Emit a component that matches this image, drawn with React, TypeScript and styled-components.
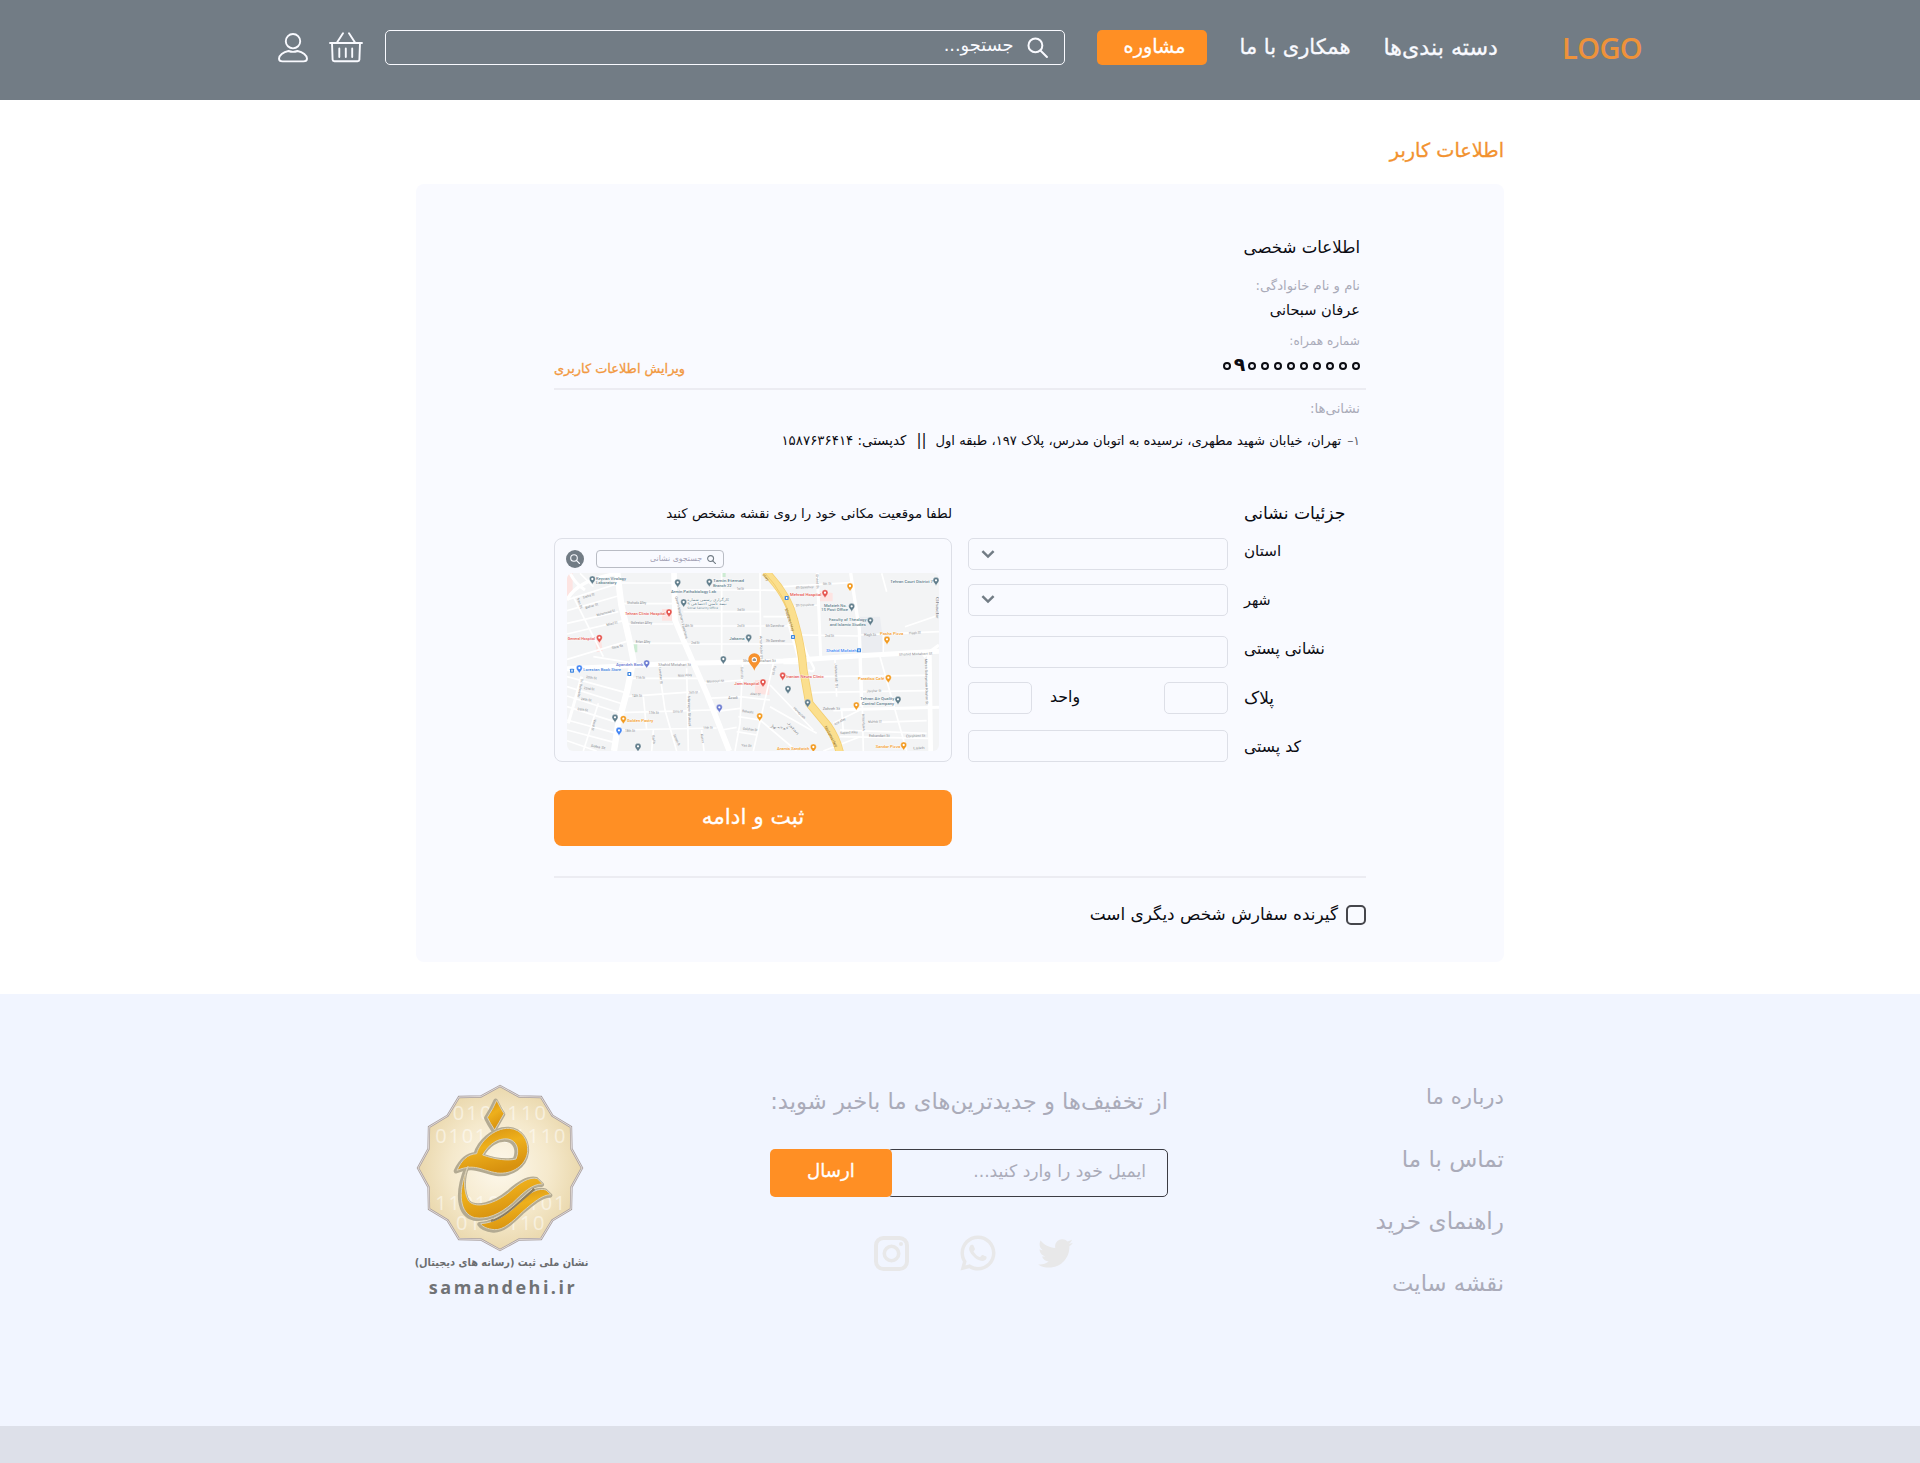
import React from 'react';
import styled, { createGlobalStyle } from 'styled-components';
import { RiTwitterFill, RiWhatsappLine } from 'react-icons/ri';

const orange = '#ff8f24';
const muted = '#aaabb9';
const line = '#dddfe7';
const sans = '"DejaVu Sans", "Noto Sans", sans-serif';

const Global = createGlobalStyle`
  * { box-sizing: border-box; }
  body { margin: 0; background: #fff; font-family: ${sans}; color: #0b0b12; }
  input, button { font-family: inherit; }
`;

const Page = styled.div`
  direction: rtl;
  min-height: 1463px;
  display: flex;
  flex-direction: column;
`;

const Text = styled.span<{ $s: number; $l: number; $c?: string; $mt?: number; $medium?: boolean }>`
  display: block;
  white-space: nowrap;
  font-size: ${(p) => p.$s}px;
  font-weight: 400;
  line-height: ${(p) => p.$l}px;
  margin: ${(p) => p.$mt ?? 0}px 0 0;
  color: ${(p) => p.$c ?? 'inherit'};
  -webkit-text-stroke: ${(p) => (p.$medium ? '0.3px' : '0')};
`;

/* Header */
const Header = styled.header`
  height: 100px;
  background: #727c85;
  padding: 30px 279px 0 278px;
  display: flex;
  align-items: flex-start;
`;
const Brand = styled.div`
  direction: ltr;
  width: 79px;
  margin-left: 64px;
  font: 600 29px/36px "Open Sans", "Noto Sans", sans-serif;
  letter-spacing: -0.6px;
  color: #ee923a;
  text-align: right;
  white-space: nowrap;
`;
const Nav = styled.nav`
  display: flex;
  gap: 33px;
  margin-left: 33px;
  color: #f9faff;
`;
const ConsultButton = styled.button`
  width: 110px;
  height: 35px;
  padding: 0 0 0 6px;
  border: 0;
  border-radius: 5px;
  background: ${orange};
  color: #fff;
  display: flex;
  align-items: flex-start;
  justify-content: center;
  margin-left: 32px;
`;
const SearchBox = styled.div`
  flex: 1;
  height: 35px;
  border: 1px solid #f9faff;
  border-radius: 5px;
  display: flex;
  align-items: flex-start;
  gap: 13px;
  padding: 0 16px;
  color: #f9faff;
`;
const SearchIcon = styled.div`
  display: flex;
  margin-top: 6px;
`;
const HeaderIcon = styled.svg<{ $w: number; $gap: number }>`
  width: ${(p) => p.$w}px;
  height: 32px;
  margin: 2px ${(p) => p.$gap}px 0 0;
  fill: none;
  stroke: #f9faff;
  stroke-width: 1.9;
  stroke-linecap: round;
  stroke-linejoin: round;
`;

/* Card */
const Main = styled.main`
  padding: 30px 416px 32px;
`;
const Card = styled.section`
  margin-top: 12px;
  height: 778px;
  border-radius: 8px;
  background: #f9faff;
  padding: 51px 138px 0;
`;
const Info = styled.div`
  padding-right: 6px;
`;
const PhoneRow = styled.div`
  height: 39px;
  padding-right: 4px;
  border-bottom: 2px solid #ececf2;
  display: flex;
  justify-content: space-between;
`;
const Phone = styled.div`
  direction: ltr;
  display: flex;
  height: 37px;
`;
const Digit = styled.span`
  width: 12.9px;
  display: flex;
  justify-content: center;
  font-weight: 700;
  font-size: 19px;
  line-height: 26px;
`;
const Zero = styled.span`
  width: 8px;
  height: 8px;
  margin-top: 11px;
  border: 2px solid #0b0b12;
  border-radius: 50%;
  font-weight: 400;
  font-size: 4px;
  line-height: 4px;
  text-align: center;
`;
const AddressRow = styled.div`
  display: flex;
  margin-top: 11px;
`;
const Gap = styled.span<{ $w: number }>`
  width: ${(p) => p.$w}px;
`;

const Details = styled.div`
  display: flex;
  gap: 16px;
  margin-top: 50px;
`;
const Labels = styled.div`
  width: 122px;
  height: 261px;
  display: flex;
  flex-direction: column;
  align-items: flex-end;
`;
const Fields = styled.div`
  width: 260px;
  padding-top: 37px;
`;
const FieldRow = styled.div<{ $mt: number }>`
  display: flex;
  align-items: flex-start;
  margin-top: ${(p) => p.$mt}px;
`;
const Field = styled.input<{ $small?: boolean }>`
  width: ${(p) => (p.$small ? '64px' : '100%')};
  height: 32px;
  border: 1px solid ${line};
  border-radius: 5px;
  background: #f9faff;
  padding: 0 8px;
`;
const Select = styled.div<{ $top: number }>`
  width: 100%;
  height: 32px;
  border: 1px solid ${line};
  border-radius: 5px;
  display: flex;
  justify-content: flex-end;
  padding: ${(p) => p.$top}px 0 0 12px;
`;
const UnitLabel = styled.div`
  margin: 0 auto 0 18px;
`;
const MapColumn = styled.div`
  width: 398px;
`;
const MapPanel = styled.div`
  margin-top: 11px;
  height: 224px;
  border: 1px solid ${line};
  border-radius: 8px;
  padding: 11px 12px 0;
`;
const MapTools = styled.div`
  display: flex;
  justify-content: flex-end;
  gap: 12px;
  margin-left: -1px;
  margin-bottom: 5px;
`;
const MapSearch = styled.div`
  width: 128px;
  height: 18px;
  border: 1px solid #b9bcc4;
  border-radius: 4px;
  display: flex;
  align-items: flex-start;
  gap: 5px;
  padding: 0 7px;
`;
const SmallIcon = styled.span`
  display: flex;
  margin-top: 4px;
`;
const RoundButton = styled.button`
  width: 18px;
  height: 18px;
  padding: 0;
  border: 0;
  border-radius: 50%;
  background: #727c85;
  display: flex;
  align-items: center;
  justify-content: center;
`;
const MapSvg = styled.svg`
  display: block;
  width: 372px;
  height: 178px;
  border-radius: 6px;
  direction: ltr;
`;
const Submit = styled.button`
  width: 100%;
  height: 56px;
  margin-top: 28px;
  padding: 0;
  border: 0;
  border-radius: 8px;
  background: ${orange};
  color: #fff;
  display: flex;
  justify-content: center;
  align-items: flex-start;
`;
const Receiver = styled.label`
  display: flex;
  gap: 8px;
  margin-top: 30px;
  padding-top: 27px;
  border-top: 2px solid #ececf2;
`;
const Checkbox = styled.input`
  appearance: none;
  width: 20px;
  height: 20px;
  margin: 0;
  border: 2px solid #46464c;
  border-radius: 5px;
`;

/* Footer */
const Footer = styled.footer`
  height: 432px;
  background: #f1f5ff;
  padding: 72px 416px 0 415px;
  display: flex;
`;
const Links = styled.nav`
  width: 336px;
  color: ${muted};
`;
const Newsletter = styled.div`
  width: 398px;
  padding-top: 14px;
  color: ${muted};
`;
const Form = styled.div`
  display: flex;
  height: 48px;
  margin-top: 27px;
`;
const Email = styled.div`
  flex: 1;
  border: 1px solid #3c3c43;
  border-radius: 5px;
  margin-left: -5px;
  padding: 0 21px;
`;
const Send = styled.button`
  width: 122px;
  height: 48px;
  padding: 0;
  border: 0;
  border-radius: 5px;
  background: ${orange};
  color: #fff;
  display: flex;
  justify-content: center;
  z-index: 1;
`;
const Social = styled.div`
  display: flex;
  align-items: center;
  height: 42px;
  margin-top: 35px;
  padding-right: 92px;
  color: #e8e8e9;
`;
const WhatsApp = styled.span`
  display: flex;
  margin-right: 36px;
  margin-left: -4px;
`;
const Insta = styled.svg`
  width: 35px;
  height: 35px;
  margin-right: 52px;
`;
const Seal = styled.div`
  width: 173px;
  margin-right: auto;
  padding-top: 18px;
  display: flex;
  flex-direction: column;
  align-items: center;
`;
const SealArt = styled.svg`
  width: 168px;
  height: 168px;
  margin-right: 3px;
  direction: ltr;
`;
const SealCaption = styled.div`
  font: 700 10.9px/20px "DejaVu Sans Condensed", "DejaVu Sans", sans-serif;
  color: #6b6d70;
  white-space: nowrap;
  margin-top: 1px;
`;
const SealSite = styled.div`
  direction: ltr;
  font: 700 18px/24px "Open Sans", "Noto Sans", sans-serif;
  letter-spacing: 2.5px;
  color: #707275;
  white-space: nowrap;
  margin: 2px 0 0 3px;
`;
const BottomBar = styled.div`
  height: 37px;
  background: #dde0e9;
`;

const Magnifier = ({ size, color, w = 1.9 }: { size: number; color: string; w?: number }) => (
  <svg width={size} height={size} viewBox="0 0 20 20" fill="none" stroke={color} strokeWidth={w} strokeLinecap="round">
    <circle cx="8" cy="8" r="6.6" />
    <path d="M12.8 12.8 19 19" />
  </svg>
);
const Chevron = () => (
  <svg width="14" height="10" viewBox="0 0 14 10" fill="none" stroke="#727c85" strokeWidth="2.500">
    <path d="M1.400 1.200 7 6.600l5.600-5.400" />
  </svg>
);

type Pin = [number, number, string];
const slate = '#607d8b';
const red = '#e5554f';
const amber = '#f29a1f';
const blue = '#4285f4';
const violet = '#6b7bd0';
const pins: Pin[] = [
  [157, 270, slate], [413, 280, slate], [508, 278, slate], [431, 339, slate], [387, 369, red],
  [178, 446, red], [626, 445, slate], [550, 510, slate], [320, 522, violet], [118, 537, blue],
  [669, 579, red], [538, 655, violet], [225, 685, slate], [250, 689, amber], [237, 724, blue],
  [294, 772, slate], [659, 681, amber], [728, 559, red], [744, 599, slate], [803, 640, slate],
  [820, 774, amber], [949, 648, amber], [1045, 566, amber], [1074, 631, slate], [1091, 768, amber],
  [1041, 451, amber], [991, 394, slate], [935, 352, slate], [930, 291, amber], [855, 311, red],
  [1188, 274, slate],
];
type Place = [number, number, string, string, number?];
const places: Place[] = [
  [168, 269, 'Keyvan Virology', slate, 90], [168, 283, 'Laboratory', slate, 62],
  [393, 308, 'Armin Pathobiology Lab', slate, 135],
  [519, 277, 'Tamin Etemad', slate, 93], [519, 291, 'Branch 22', slate, 56],
  [255, 374, 'Tehran Clinic Hospital', red, 122], [83, 451, 'General Hospital', red, 82],
  [568, 451, 'Jabama', slate, 46], [228, 527, 'Ayandeh Bank', violet, 82],
  [130, 543, 'Lorestan Book Store', '#3f83dd', 113], [583, 585, 'Jam Hospital', red, 75],
  [739, 565, 'Iranian Neuro Clinic', red, 112], [261, 696, 'Golden Pastry', amber, 79],
  [711, 780, 'Aramis Sandwich', amber, 97], [1007, 774, 'Sandor Pizza', amber, 74],
  [954, 571, 'Paradiso Café', amber, 79], [961, 630, 'Tehran Air Quality', slate, 102],
  [965, 644, 'Control Company', slate, 97], [1020, 435, 'Pasha Pizza', amber, 70],
  [867, 393, 'Faculty of Theology', slate, 113], [869, 407, 'and Islamic Studies', slate, 109],
  [852, 350, 'Mofateh No.', slate, 68], [843, 364, '15 Post Office', slate, 81],
  [750, 317, 'Mehrad Hospital', red, 94], [1051, 280, 'Tehran Court District 7', slate, 128],
  [859, 486, 'Shahid Mofateh', blue, 91],
];
type Street = [number, number, string, number, number];
const streets: Street[] = [
  [355, 527, 'Shahid Motahari St', 98, 0], [609, 517, 'Shahid Motahari St', 98, 0],
  [1077, 497, 'Shahid Motahari St', 100, -2], [848, 661, 'Zohreh St', 52, 0],
  [261, 343, 'Shohada Alley', 58, 0], [272, 401, 'Golestan Alley', 64, 0],
  [287, 460, 'Erfan Alley', 44, 0], [590, 301, '1st St', 22, 0], [592, 362, '3rd St', 22, 0],
  [592, 410, '2nd St', 22, 0], [435, 411, '4th St', 24, 0], [454, 463, '2nd St', 24, 0],
  [677, 411, '6th Daneshvar', 56, 0], [677, 457, '7th Daneshvar', 58, 0],
  [767, 296, '4th Daneshvar', 54, -2], [767, 350, '5th Daneshvar', 56, -3],
  [848, 285, '5th St', 26, -2], [855, 440, '2nd St', 27, 0], [972, 438, 'Hagh St', 36, 0],
  [1107, 433, 'Hagh St', 36, -4], [130, 326, 'Sadra St', 36, -17], [137, 357, 'Bahar St', 40, -17],
  [171, 379, 'Mohammadi St', 56, -15], [200, 408, 'Milad St', 34, -14], [216, 477, 'Sara St', 34, -12],
  [287, 567, '11th St', 28, 0], [414, 560, 'Nasr Alley', 42, -3], [500, 578, 'Mansouri St', 52, -3],
  [276, 620, '14th St', 30, 0], [446, 611, '16th St', 28, -2], [326, 671, '17th St', 30, 0],
  [399, 668, 'Sima St', 30, -2], [255, 727, '18th St', 30, 0], [490, 717, '19th St', 28, -2],
  [565, 626, 'Azadi', 28, 0], [606, 666, 'Behesht', 34, 8], [608, 719, 'Golshan St', 44, 6],
  [631, 615, 'Aban St', 30, 2], [604, 769, 'Yas St', 30, 4], [138, 564, '20th St', 32, 8],
  [131, 597, '22nd St', 32, 8], [122, 630, '24th St', 32, 8], [112, 660, '26th St', 32, 8],
  [152, 770, 'Saba St', 44, 10], [980, 607, 'Javaher St', 44, -2], [985, 699, 'Mahtab St', 40, -2],
  [901, 732, 'Sepand Alley', 52, -3], [987, 742, 'Eskandari St', 62, 0], [1098, 742, 'Ebrahimi St', 58, -2],
  [885, 706, 'Azar Alley', 36, -28], [1120, 778, 'Laleh', 34, -2], [690, 712, 'کوچه بهار', 54, 6],
  [111, 326, 'Iran St', 32, 72], [405, 320, 'Qaem Magham Farahani', 130, 76],
  [356, 532, 'Larestan St', 50, 84], [443, 618, 'Mirzaye Shirazi', 90, 88],
  [400, 735, 'Sanaei St', 36, 66], [482, 732, 'Karim', 28, 82], [336, 736, 'Safa', 26, 82],
  [123, 566, 'Dr. Beheshti', 56, 101], [162, 688, 'Vesal St', 34, 103],
  [659, 438, 'Amir Kabir St', 68, 88], [602, 530, 'Sohrab', 36, 88], [702, 528, 'Fajr St', 26, 104],
  [828, 252, 'Ghaed St', 44, 88], [884, 520, 'Jahantab St', 74, 88], [966, 672, 'N Mofateh', 50, 88],
  [1155, 506, 'Mirza Soleyman Khater St', 138, 89], [740, 700, 'Jafari', 48, 48],
  [760, 655, 'Hoveyzeh', 46, 45], [1187, 320, 'Ghadir', 66, 90],
];
const minorRoads = [
  'M81 400 235 365', 'M81 330 230 282', 'M81 362 234 318', 'M81 432 250 392', 'M81 508 268 452',
  'M100 320 190 500', 'M120 250 160 290', 'M245 279H400', 'M250 341H400', 'M255 402H400', 'M268 460H430',
  'M160 500 285 520', 'M81 560 265 610', 'M81 590 258 645', 'M81 618 250 672', 'M81 650 240 700',
  'M81 690 230 730', 'M81 720 225 758', 'M81 752 170 783', 'M130 783 175 640', 'M262 565H480',
  'M255 620 480 604', 'M240 668 515 660', 'M232 720 530 714', 'M355 520 375 660 410 783',
  'M440 535 445 783', 'M310 620 320 720', 'M340 720 335 783', 'M485 720 492 783', 'M420 300H660',
  'M430 365H660', 'M430 408H760', 'M440 462H770', 'M545 249V520', 'M660 249 662 515', 'M590 299 735 302',
  'M480 580 610 570', 'M500 625 605 620', 'M525 665 600 655', 'M545 720 590 712', 'M608 520 600 700 585 783',
  'M700 520 640 783', 'M600 620 690 630', 'M595 680 660 690', 'M590 725 650 735', 'M690 585 820 720',
  'M660 690 770 783', 'M690 650 830 730', 'M730 520H795', 'M730 290 930 278', 'M750 350 840 345',
  'M780 435 960 438', 'M960 435 1197 425', 'M1095 410 1197 375', 'M1025 250 1040 305', 'M1030 430V490',
  'M885 510 890 620', 'M810 560 1160 556', 'M800 608 1160 602', 'M965 560 970 783', 'M1020 500 1100 783',
  'M900 720 1160 730', 'M880 700 960 660', 'M985 698 1160 692', 'M900 740 1165 745', 'M905 660 910 725',
  'M670 380H750', 'M850 783 960 740',
];
const mainRoads = [
  { d: 'M81 536 355 523 470 519 600 517 730 513 960 497 1197 484', w: 15 },
  { d: 'M232 249 244 345 268 450 280 510 262 600 235 700 222 783', w: 19 },
  { d: 'M402 249 405 390 430 450 500 610 568 783', w: 17 },
  { d: 'M81 330Q110 270 235 249', w: 10 },
  { d: 'M832 249 842 500', w: 9 },
  { d: 'M932 249 958 420 965 650', w: 10 },
  { d: 'M880 660 1197 652', w: 9 },
  { d: 'M1168 490 1172 783', w: 14 },
  { d: 'M1150 500 1197 465', w: 10 },
  { d: 'M760 380 800 490 822 535Q822 550 805 540', w: 7 },
  { d: 'M745 400 775 505', w: 7 },
  { d: 'M125 560 85 700', w: 9 },
  { d: 'M90 249Q105 280 135 300', w: 9 },
];
const highway = 'M676 245Q745 315 762 390Q785 470 790 540L808 640L862 705Q890 745 900 790';

const StreetMap = () => (
  <MapSvg viewBox="81 249 1116 534" preserveAspectRatio="none">
    <rect x="81" y="249" width="1116" height="534" fill="#f3f4f5" />
    <path d="M81 249h17v60l-17 25zM366 357h30v35h-30zM166 455h18l4 28-18 4zM645 570h43v45l-43-5zM838 303l40 6v25h-38z" fill="#fde4e2" />
    <path d="M545 249h12v12h-12zM280 462h12v25h-9z" fill="#cdebd3" />
    <path d="M960 380h60l14 108h-70z" fill="#ebedf1" />
    <g fill="none" stroke="#fff" strokeWidth="5">
      {minorRoads.map((d) => <path key={d} d={d} />)}
    </g>
    <g fill="none" stroke="#fff" strokeLinejoin="round">
      {mainRoads.map((r) => <path key={r.d} d={r.d} strokeWidth={r.w} />)}
    </g>
    <path d={highway} fill="none" stroke="#f3cf72" strokeWidth="25" />
    <path d={highway} fill="none" stroke="#fbdf8e" strokeWidth="20" />
    <path d="M676 250Q735 315 752 390" fill="none" stroke="#eec45f" strokeWidth="2" />
    <g fontFamily="Roboto, sans-serif" fontSize="10" fill="#85898e">
      {streets.map(([x, y, t, w, r], i) => (
        <text key={i} transform={`translate(${x} ${y}) rotate(${r})`} textLength={w} lengthAdjust="spacingAndGlyphs">{t}</text>
      ))}
      <g fill="#94702a" fontSize="12">
        <text transform="translate(667 256) rotate(50)">Hwy</text>
        <text transform="translate(734 357) rotate(72)" textLength="72">Modarres Hwy</text>
        <text transform="translate(853 710) rotate(62)" textLength="70">Modarres Hwy</text>
      </g>
    </g>
    <g fontFamily="Roboto, sans-serif" fontSize="13" fontWeight="500" stroke="#fff" strokeWidth="2" paintOrder="stroke">
      {places.map(([x, y, t, c, w]) => (
        <text key={t} x={x} y={y} fill={c} textLength={w} lengthAdjust="spacingAndGlyphs">{t}</text>
      ))}
      <g fontFamily="DejaVu Sans" fontSize="12" fill={slate}>
        <text x="442" y="332" textLength="125" lengthAdjust="spacingAndGlyphs">کارگزاری رسمی شماره</text>
        <text x="442" y="346" textLength="118" lengthAdjust="spacingAndGlyphs">۹ بیمه تامین اجتماعی</text>
        <text x="442" y="357" fontSize="9" textLength="92" lengthAdjust="spacingAndGlyphs">Social Security Office</text>
      </g>
    </g>
    {pins.map(([x, y, c]) => (
      <g key={`${x}-${y}`} transform={`translate(${x} ${y})`}>
        <path d="M0 13C-3 6-9 3-9-3a9 9 0 0 1 18 0C9 3 3 6 0 13Z" fill={c} stroke="#fff" strokeWidth="1" />
        <circle cy="-3" r="3.4" fill="#fff" />
      </g>
    ))}
    {[[740, 324], [759, 441], [268, 552], [96, 542], [957, 481]].map(([x, y]) => (
      <g key={x}>
        <rect x={x - 6} y={y - 6} width="12" height="12" rx="2" fill="#3f87e0" />
        <rect x={x - 2} y={y - 3} width="4" height="6" fill="#fff" />
      </g>
    ))}
    <path d="M643 542C638 527 625 522 625 508a18 18 0 0 1 36 0C661 522 648 527 643 542Z" fill="#f6922f" />
    <circle cx="643" cy="509" r="8" fill="#fff" />
    <path d="M638 513v-5l5-4 5 4v5z" fill="#9a9590" />
  </MapSvg>
);

const sealOutline = Array.from({ length: 24 }, (_, i) => {
  const a = (i * Math.PI) / 12;
  const r = i % 2 ? 222 : 246;
  return `${(302 + r * Math.sin(a)).toFixed(1)},${(325 - r * Math.cos(a)).toFixed(1)}`;
}).join(' ');
const sealStrokes = [
  'M292 122Q304 146 314 162Q298 190 286 211Q272 190 264 173Q282 146 292 122Z',
  'M173 332C187 302 203 284 232 282C240 250 282 204 330 206C368 209 388 242 385 276C380 318 338 345 294 340C246 332 226 310 173 332ZM250 286C290 300 326 304 350 298C362 270 352 242 326 238C296 234 268 254 250 286Z',
  'M206 320C194 346 190 392 208 424C232 450 290 430 330 397C360 370 390 350 414 357L430 373C398 372 370 400 340 430C300 465 262 480 226 474C182 462 172 402 206 320Z',
  'M244 492C290 490 330 460 365 425C390 397 420 384 440 391L455 405C430 404 400 430 370 456C340 486 312 512 285 510C265 508 250 502 244 492Z',
];
const SealLogo = () => (
  <SealArt viewBox="50 73 504 504">
    <defs>
      <radialGradient id="cream">
        <stop offset="0" stopColor="#fdf8ec" />
        <stop offset="0.6" stopColor="#f5e9cc" />
        <stop offset="1" stopColor="#ead8ad" />
      </radialGradient>
      <linearGradient id="gold" x1="0" y1="0" x2="0.4" y2="1">
        <stop offset="0" stopColor="#d08a10" />
        <stop offset="0.5" stopColor="#eeb01c" />
        <stop offset="1" stopColor="#d8920f" />
      </linearGradient>
      <clipPath id="sealClip"><polygon points={sealOutline} /></clipPath>
    </defs>
    <polygon points={sealOutline} fill="url(#cream)" />
    <g clipPath="url(#sealClip)" fontFamily="Open Sans, sans-serif" fontSize="60" fill="#fff" opacity="0.5">
      <text x="160" y="182" textLength="280">0100110</text>
      <text x="108" y="250" textLength="390">0101101110</text>
      <text x="108" y="450" textLength="390">1101001101</text>
      <text x="170" y="512" textLength="265">0100110</text>
    </g>
    <polygon points={sealOutline} fill="none" stroke="#aaa09f" strokeWidth="7" />
    <polygon points={sealOutline} fill="none" stroke="#ebe5e2" strokeWidth="2.5" />
    <g strokeLinejoin="round" fillRule="evenodd">
      {sealStrokes.map((d) => <path key={d} d={d} transform="translate(-3 2)" fill="#b5ab92" stroke="#b3aa92" strokeWidth="14" />)}
      {sealStrokes.map((d) => <path key={d} d={d} fill="url(#gold)" stroke="#d9d0b8" strokeWidth="3" />)}
      <path d="M275 484C320 470 360 425 405 388" fill="none" stroke="#8a7c60" strokeWidth="7" />
      <path d="M282 478C325 460 355 425 398 388" fill="none" stroke="#f3eddb" strokeWidth="2" />
    </g>
  </SealArt>
);

const phone = '۰۹۰۰۰۰۰۰۰۰۰'.split('');

export default function App() {
  return (
    <Page>
      <Global />
      <Header>
        <Brand>LOGO</Brand>
        <Nav>
          <Text $s={22.2} $l={34} $medium>دسته بندی‌ها</Text>
          <Text $s={21} $l={34} $medium>همکاری با ما</Text>
        </Nav>
        <ConsultButton><Text $s={19.2} $l={34} $medium>مشاوره</Text></ConsultButton>
        <SearchBox>
          <SearchIcon><Magnifier size={21} color="#f9faff" /></SearchIcon>
          <Text $s={17.8} $l={28}>جستجو...</Text>
        </SearchBox>
        <HeaderIcon $w={34} $gap={22} viewBox="0 0 34 32">
          <path d="M1 11h32M3 11l.6 16.6q.1 1.6 1.8 1.6h23.2q1.7 0 1.8-1.6L31 11M8 10.5 14 1.2M26 10.5 20 1.2M10.3 16.5v8.5M16.8 16.5v8.5M23.2 16.5v8.5" />
        </HeaderIcon>
        <HeaderIcon $w={30} $gap={21} viewBox="0 0 30 32">
          <circle cx="15" cy="9.2" r="7.2" />
          <path d="M10.5 19C5 20 1 23.500 1 26.500 1 28.700 2.500 29.400 4.500 29.400H25.500C27.500 29.400 29 28.700 29 26.500 29 23.500 25 20 19.500 19Q15 20.800 10.500 19Z" />
        </HeaderIcon>
      </Header>

      <Main>
        <Text as="h1" $s={19.3} $l={42} $c="#f2922f" $medium>اطلاعات کاربر</Text>
        <Card>
          <Info>
            <Text as="h2" $s={16.6} $l={26}>اطلاعات شخصی</Text>
            <Text $s={13.2} $l={21} $mt={14} $c={muted}>نام و نام خانوادگی:</Text>
            <Text $s={14.6} $l={22} $mt={3}>عرفان سبحانی</Text>
            <Text $s={12.1} $l={20} $mt={10} $c={muted}>شماره همراه:</Text>
          </Info>
          <PhoneRow>
            <Phone>
              {phone.map((d, i) => <Digit key={i}>{d === '۰' ? <Zero>{d}</Zero> : d}</Digit>)}
            </Phone>
            <Text $s={12.9} $l={36} $c="#f2993f" $medium>ویرایش اطلاعات کاربری</Text>
          </PhoneRow>
          <Info>
            <Text $s={13.3} $l={21} $mt={8} $c={muted}>نشانی‌ها:</Text>
            <AddressRow>
              <Text $s={12.4} $l={21} $c="#62626c">۱–</Text>
              <Gap $w={6} />
              <Text $s={13.14} $l={21}>تهران، خیابان شهید مطهری، نرسیده به اتوبان مدرس، پلاک ۱۹۷، طبقه اول</Text>
              <Gap $w={9} />
              <Text $s={15} $l={21}>||</Text>
              <Gap $w={10} />
              <Text $s={13.4} $l={21}>کدپستی: ۱۵۸۷۶۳۶۴۱۴</Text>
            </AddressRow>
          </Info>
          <Details>
            <Labels>
              <Text $s={17.2} $l={24}>جزئیات نشانی</Text>
              <Text $s={15.1} $l={49} $mt={2}>استان</Text>
              <Text $s={14.4} $l={49}>شهر</Text>
              <Text $s={15.5} $l={49}>نشانی پستی</Text>
              <Text $s={17} $l={48}>پلاک</Text>
              <Text $s={15.7} $l={49}>کد پستی</Text>
            </Labels>
            <Fields>
              <Select $top={11}><Chevron /></Select>
              <FieldRow $mt={14}><Select $top={10}><Chevron /></Select></FieldRow>
              <FieldRow $mt={20}><Field /></FieldRow>
              <FieldRow $mt={14}>
                <Field $small />
                <UnitLabel><Text $s={15.8} $l={30}>واحد</Text></UnitLabel>
                <Field $small />
              </FieldRow>
              <FieldRow $mt={16}><Field /></FieldRow>
            </Fields>
            <MapColumn>
              <Text $s={13.3} $l={26}>لطفا موقعیت مکانی خود را روی نقشه مشخص کنید</Text>
              <MapPanel>
                <MapTools>
                  <MapSearch>
                    <SmallIcon><Magnifier size={9} color="#727c85" w={2.4} /></SmallIcon>
                    <Text $s={7.8} $l={16} $c="#a3a1b5">جستجوی نشانی</Text>
                  </MapSearch>
                  <RoundButton><Magnifier size={10} color="#f9faff" w={2.2} /></RoundButton>
                </MapTools>
                <StreetMap />
              </MapPanel>
              <Submit><Text $s={21.6} $l={54} $medium>ثبت و ادامه</Text></Submit>
            </MapColumn>
          </Details>
          <Receiver>
            <Checkbox type="checkbox" />
            <Text $s={16.9} $l={19}>گیرنده سفارش شخص دیگری است</Text>
          </Receiver>
        </Card>
      </Main>

      <Footer>
        <Links>
          <Text $s={21.2} $l={62}>درباره ما</Text>
          <Text $s={23} $l={62}>تماس با ما</Text>
          <Text $s={23.2} $l={62}>راهنمای خرید</Text>
          <Text $s={22.7} $l={62}>نقشه سایت</Text>
        </Links>
        <Newsletter>
          <Text $s={22.65} $l={42}>از تخفیف‌ها و جدیدترین‌های ما باخبر شوید:</Text>
          <Form>
            <Email><Text $s={17.2} $l={43}>ایمیل خود را وارد کنید...</Text></Email>
            <Send><Text $s={18.2} $l={43} $medium>ارسال</Text></Send>
          </Form>
          <Social>
            <RiTwitterFill size={41} />
            <WhatsApp><RiWhatsappLine size={42} /></WhatsApp>
            <Insta viewBox="0 0 35 35" fill="none" stroke="currentColor">
              <rect x="2" y="2" width="31" height="31" rx="7.5" strokeWidth="4" />
              <circle cx="17.5" cy="17.5" r="7.2" strokeWidth="3.6" />
              <circle cx="27" cy="8" r="2" fill="currentColor" stroke="none" />
            </Insta>
          </Social>
        </Newsletter>
        <Seal>
          <SealLogo />
          <SealCaption>نشان ملی ثبت (رسانه های دیجیتال)</SealCaption>
          <SealSite>samandehi.ir</SealSite>
        </Seal>
      </Footer>
      <BottomBar />
    </Page>
  );
}
